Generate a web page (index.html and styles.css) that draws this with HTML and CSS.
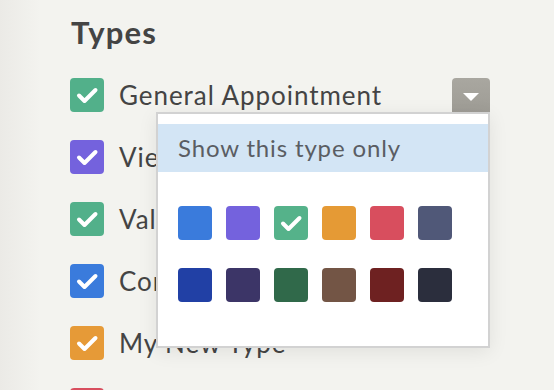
FILE: index.html
```html
<!DOCTYPE html>
<html lang="en">
<head>
    <meta charset="UTF-8">
    <title>Types</title>
    <link rel="stylesheet" href="styles.css">
</head>
<body>
    <div class="panel">
        <h2>Types</h2>

        <ul class="types">
            <li class="type hover">
                <span class="check c-green"><svg viewBox="0 0 34 34"><path d="M9 17.5l5.5 5.5L25.5 12"/></svg></span>
                <span class="name">General Appointment</span>
                <span class="drop"><svg viewBox="0 0 16 8"><path d="M0 0h16L8 8z"/></svg></span>

                <div class="menu">
                    <div class="menu-item">Show this type only</div>
                    <div class="swatches">
                        <span class="swatch" style="background:#3a7bdc"></span>
                        <span class="swatch" style="background:#7462dd"></span>
                        <span class="swatch" style="background:#55b28a"><svg viewBox="0 0 34 34"><path d="M9 17.5l5.5 5.5L25.5 12"/></svg></span>
                        <span class="swatch" style="background:#e59a35"></span>
                        <span class="swatch" style="background:#d84e5e"></span>
                        <span class="swatch" style="background:#505878"></span>
                        <span class="swatch" style="background:#2140a5"></span>
                        <span class="swatch" style="background:#3c3567"></span>
                        <span class="swatch" style="background:#30694a"></span>
                        <span class="swatch" style="background:#735545"></span>
                        <span class="swatch" style="background:#6e2121"></span>
                        <span class="swatch" style="background:#2b2e3d"></span>
                    </div>
                </div>
            </li>
            <li class="type">
                <span class="check c-purple"><svg viewBox="0 0 34 34"><path d="M9 17.5l5.5 5.5L25.5 12"/></svg></span>
                <span class="name">Viewing</span>
            </li>
            <li class="type">
                <span class="check c-green"><svg viewBox="0 0 34 34"><path d="M9 17.5l5.5 5.5L25.5 12"/></svg></span>
                <span class="name">Valuation</span>
            </li>
            <li class="type">
                <span class="check c-blue"><svg viewBox="0 0 34 34"><path d="M9 17.5l5.5 5.5L25.5 12"/></svg></span>
                <span class="name">Consultation</span>
            </li>
            <li class="type">
                <span class="check c-orange"><svg viewBox="0 0 34 34"><path d="M9 17.5l5.5 5.5L25.5 12"/></svg></span>
                <span class="name">My New Type</span>
            </li>
            <li class="type">
                <span class="check c-red"></span>
            </li>
        </ul>
    </div>
</body>
</html>
```

FILE: styles.css
```css
body {
    margin: 0;
    font-family: Lato, "Open Sans", sans-serif;
    color: #444;
    background: linear-gradient(to right, #ebeae6 0, #f3f3ef 40px) #f3f3ef;
    height: 390px;
    overflow: hidden;
}

.panel {
    padding: 14px 0 0 70px;
}

h2 {
    margin: 0 0 28px 1px;
    font-size: 31px;
    font-weight: 700;
    line-height: 36px;
    letter-spacing: 1.2px;
    color: #444;
}

.types {
    list-style: none;
    margin: 0;
    padding: 0;
    width: 420px;
}

.type {
    position: relative;
    display: flex;
    align-items: center;
    height: 34px;
    margin-bottom: 28px;
}

.check {
    width: 34px;
    height: 34px;
    border-radius: 4px;
    flex-shrink: 0;
}

.check svg,
.swatch svg {
    display: block;
    width: 34px;
    height: 34px;
    fill: none;
    stroke: #fff;
    stroke-width: 4;
    stroke-linecap: round;
    stroke-linejoin: round;
}

.c-green { background: #52b08a; }
.c-purple { background: #7462dd; }
.c-blue { background: #3a7bdc; }
.c-orange { background: #e69a37; }
.c-red { background: #d84e5e; }

.name {
    margin-left: 15px;
    font-size: 26px;
    letter-spacing: 0.95px;
    color: #444;
}

.drop {
    margin-left: auto;
    margin-top: 4px;
    width: 38px;
    height: 38px;
    border-radius: 4px;
    background: linear-gradient(#a9a7a0, #9d9b94);
    display: flex;
    justify-content: center;
    padding-top: 15px;
    box-sizing: border-box;
}

.drop svg {
    width: 16px;
    height: 8px;
    fill: #fff;
}

.menu {
    position: absolute;
    left: 86px;
    top: 34px;
    width: 334px;
    height: 236px;
    box-sizing: border-box;
    background: #fff;
    border: 2px solid #d2d2d2;
    box-shadow: 0 4px 18px rgba(0, 0, 0, 0.08);
    padding-top: 10px;
    z-index: 2;
}

.menu-item {
    height: 48px;
    line-height: 48px;
    padding-left: 20px;
    background: #d3e5f5;
    font-size: 24px;
    letter-spacing: 0.85px;
    color: #5a5d63;
}

.swatches {
    display: grid;
    grid-template-columns: repeat(6, 34px);
    column-gap: 14px;
    row-gap: 28px;
    padding: 34px 0 0 20px;
}

.swatch {
    width: 34px;
    height: 34px;
    border-radius: 4px;
}
```
